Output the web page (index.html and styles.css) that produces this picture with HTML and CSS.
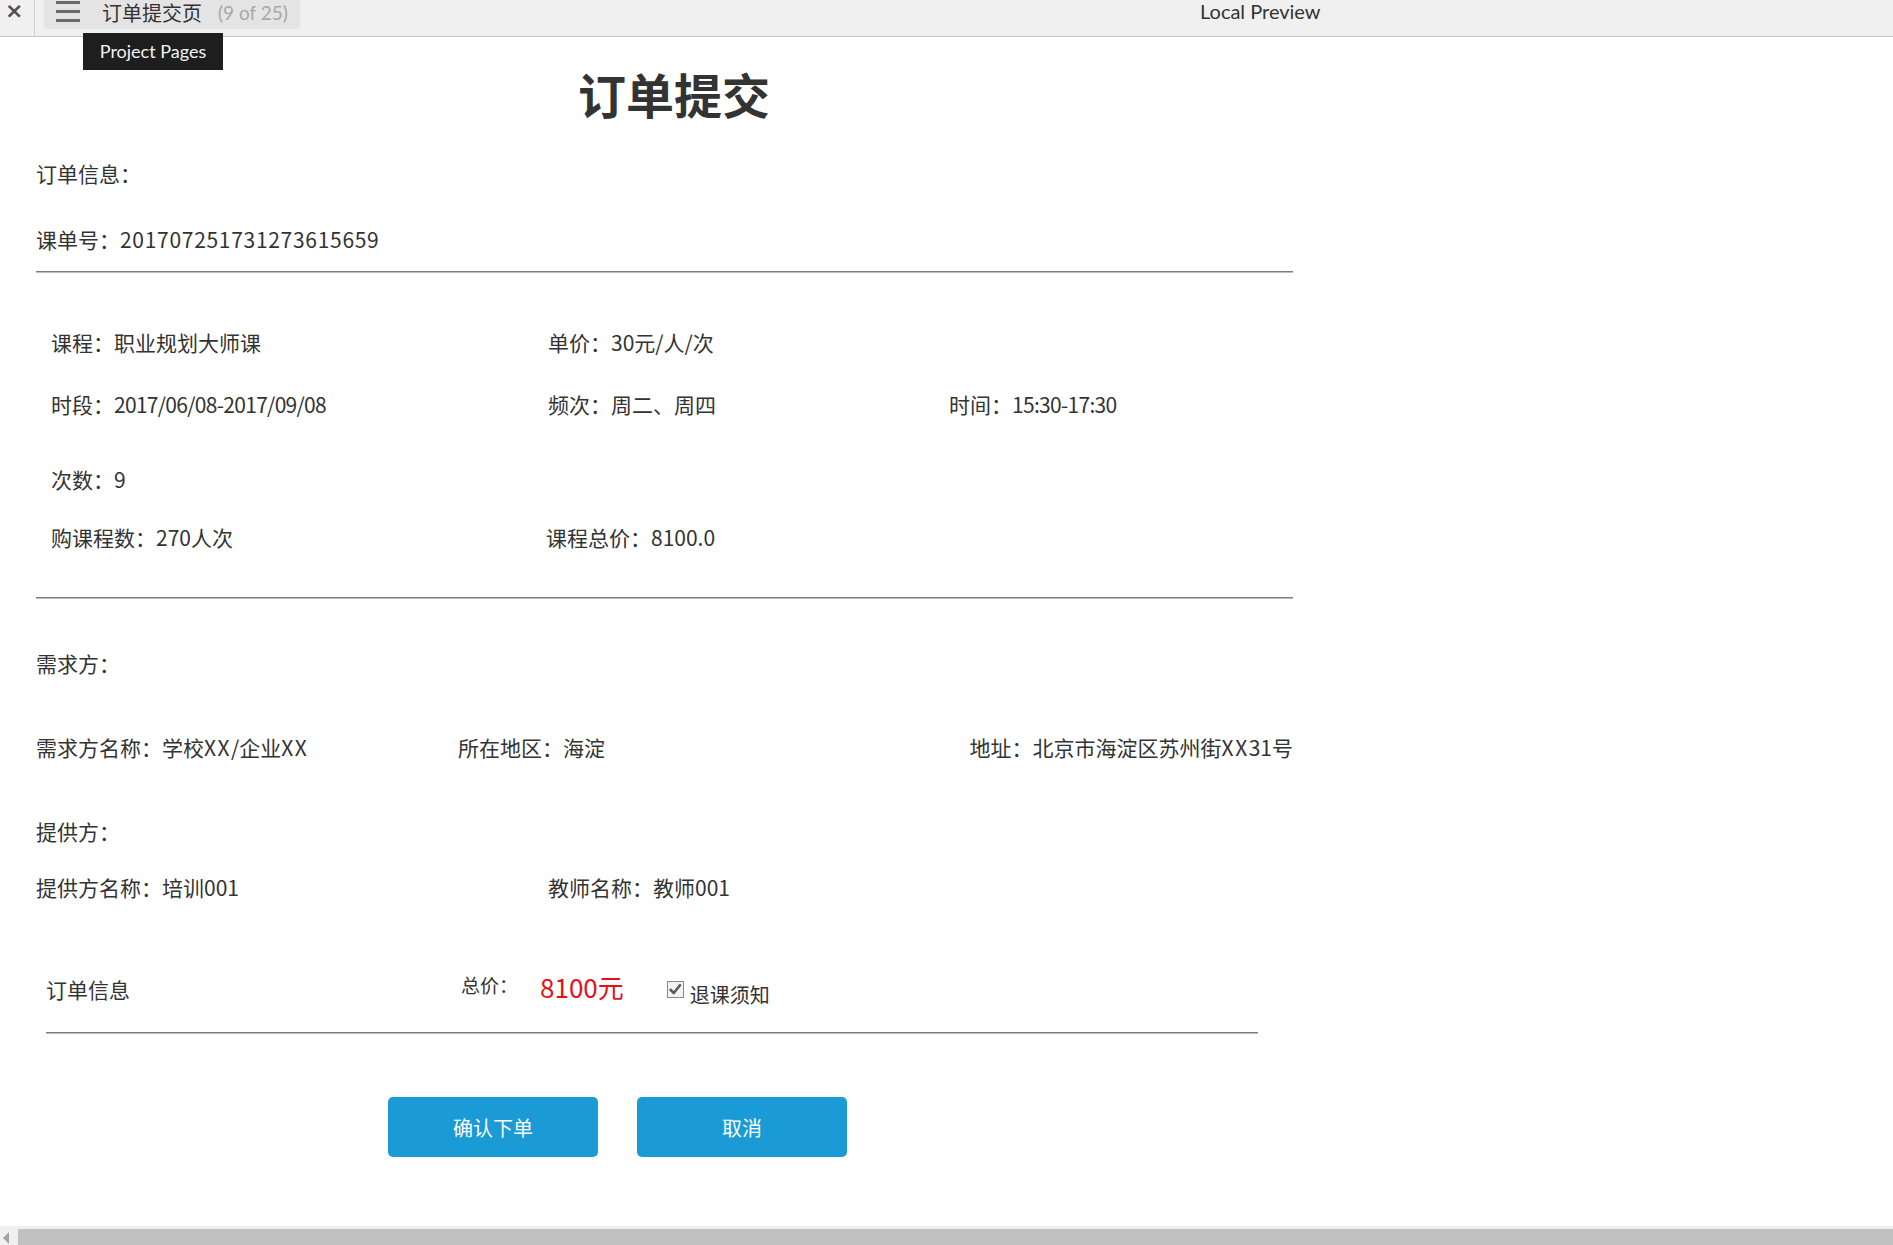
FILE: index.html
```html
<!DOCTYPE html>
<html lang="zh-CN">
<head>
<meta charset="utf-8">
<title>订单提交页</title>
<link rel="stylesheet" href="styles.css">
</head>
<body>
<div class="page">
  <header class="topbar">
    <div class="close">×</div>
    <div class="sep"></div>
    <div class="tab">
      <span class="burger"><i></i><i></i><i></i></span>
      <span class="tab-title">订单提交页</span>
      <span class="tab-count">(9 of 25)</span>
    </div>
    <div class="preview-label">Local Preview</div>
    <div class="tooltip">Project Pages</div>
  </header>

  <main class="content">
    <div class="title-wrap"><h1 class="title">订单提交</h1></div>

    <div class="row sec-label m38">订单信息：</div>
    <div class="row m38">课单号：<span class="order-no">201707251731273615659</span></div>
    <div class="rule m18"></div>

    <div class="course">
      <div class="row m55">
        <span class="c1">课程：职业规划大师课</span>
        <span class="c2">单价：30元/人/次</span>
      </div>
      <div class="row m34">
        <span class="c1">时段：<span class="narrow">2017/06/08-2017/09/08</span></span>
        <span class="c2">频次：周二、周四</span>
        <span class="c3">时间：<span class="narrow">15:30-17:30</span></span>
      </div>
      <div class="row m47">
        <span class="c1">次数：9</span>
      </div>
      <div class="row m30">
        <span class="c1">购课程数：270人次</span>
        <span class="c2 shift">课程总价：8100.0</span>
      </div>
    </div>
    <div class="rule m46"></div>

    <div class="row sec-label m50">需求方：</div>
    <div class="row m56 demand">
      <span class="d1">需求方名称：学校<span class="wide">XX</span>/企业<span class="wide">XX</span></span>
      <span class="d2">所在地区：海淀</span>
      <span class="d3">地址：北京市海淀区苏州街<span class="wide">XX</span>31号</span>
    </div>

    <div class="row sec-label m56">提供方：</div>
    <div class="row m28">
      <span class="p1">提供方名称：培训001</span>
      <span class="p2">教师名称：教师001</span>
    </div>

    <div class="summary">
      <span class="s-label">订单信息</span>
      <span class="s-total">总价：</span>
      <span class="s-price">8100元</span>
      <span class="s-check">
        <svg width="17" height="17" viewBox="0 0 17 17" aria-hidden="true">
          <rect x="0.5" y="0.5" width="16" height="16" fill="#f3f3f3" stroke="#8a8a8a"/>
          <path d="M3.5 8.8 L6.8 12 L13 4.2" fill="none" stroke="#5a5a5a" stroke-width="2.6" stroke-linecap="round" stroke-linejoin="round"/>
        </svg>
      </span>
      <span class="s-notice">退课须知</span>
    </div>
    <div class="rule rule-short"></div>

    <div class="actions">
      <button class="btn">确认下单</button>
      <button class="btn">取消</button>
    </div>
  </main>

  <div class="hscroll">
    <span class="arrow"></span>
    <div class="thumb"></div>
  </div>
</div>
</body>
</html>
```

FILE: styles.css
```css
* { box-sizing: border-box; }

html, body {
  margin: 0;
  padding: 0;
  background: #ffffff;
}

body {
  font-family: "Noto Sans CJK SC", "Noto Sans", sans-serif;
  color: #333333;
}

.page {
  display: flex;
  flex-direction: column;
  min-height: 100vh;
  overflow: hidden;
}

/* ---------- top bar ---------- */
.topbar {
  position: relative;
  display: flex;
  align-items: flex-start;
  height: 37px;
  background: #f0f0f0;
  border-bottom: 1px solid #c8c8c8;
  flex: none;
}

.close {
  width: 34px;
  height: 36px;
  padding-left: 5px;
  padding-top: 2px;
  font-family: "DejaVu Sans", sans-serif;
  font-size: 22px;
  font-weight: bold;
  line-height: 17px;
  color: #505050;
}

.sep {
  width: 1px;
  height: 36px;
  background: #cfcfcf;
}

.tab {
  display: flex;
  align-items: flex-start;
  margin-left: 9px;
  width: 256px;
  height: 29px;
  background: #e4e4e4;
  border-radius: 0 0 4px 4px;
}

.burger {
  display: flex;
  flex-direction: column;
  gap: 6px;
  margin-left: 12px;
  padding-top: 1px;
  width: 24px;
}

.burger i {
  display: block;
  height: 3px;
  background: #6a6a6a;
}

.tab-title {
  margin-left: 22px;
  padding-top: 2px;
  font-size: 20px;
  line-height: 22px;
  color: #333333;
}

.tab-count {
  margin-left: 16px;
  padding-top: 2px;
  font-family: Lato, "Noto Sans", sans-serif;
  font-size: 19px;
  line-height: 22px;
  color: #a8a8a8;
}

.preview-label {
  margin-left: 900px;
  padding-top: 1px;
  font-family: Lato, "Noto Sans", sans-serif;
  font-size: 20px;
  line-height: 20px;
  color: #333333;
}

.tooltip {
  position: absolute;
  left: 83px;
  top: 33px;
  width: 140px;
  height: 37px;
  background: #1e1e1e;
  color: #f2f2f2;
  font-family: Lato, "Noto Sans", sans-serif;
  font-size: 18px;
  line-height: 37px;
  text-align: center;
  z-index: 5;
}

/* ---------- content ---------- */
.content {
  flex: 1;
  padding-left: 36px;
  font-size: 21px;
}

.title-wrap {
  padding-top: 28px;
  padding-left: 542px;
}

.title {
  margin: 0;
  font-size: 48px;
  font-weight: bold;
  line-height: 56px;
  height: 56px;
  color: #333333;
}

.row {
  display: flex;
  height: 28px;
  line-height: 28px;
  white-space: nowrap;
}

.order-no { letter-spacing: 0.7px; }
.narrow { letter-spacing: -0.7px; }
.wide { letter-spacing: 1.5px; }

.m18 { margin-top: 18px; }
.m28 { margin-top: 28px; }
.m30 { margin-top: 30px; }
.m34 { margin-top: 34px; }
.m38 { margin-top: 38px; }
.m46 { margin-top: 46px; }
.m47 { margin-top: 47px; }
.m50 { margin-top: 50px; }
.m55 { margin-top: 55px; }
.m56 { margin-top: 56px; }

.rule {
  width: 1257px;
  height: 2px;
  background: linear-gradient(#7c7c7c 0 1px, #bdbdbd 1px 2px);
}

.course { padding-left: 15px; }
.c1 { width: 497px; }
.c2 { width: 401px; }
.c2.shift { margin-left: -2px; }

.demand { width: 1257px; }
.d1 { width: 422px; }
.d3 { margin-left: auto; }

.p1 { width: 512px; }

/* ---------- summary ---------- */
.summary {
  display: flex;
  align-items: center;
  margin-top: 68px;
  margin-left: 10px;
  height: 40px;
  white-space: nowrap;
}

.s-label { width: 415px; }

.s-total {
  font-size: 19px;
  margin-bottom: 10px;
}

.s-price {
  margin-left: 22px;
  font-size: 26px;
  color: #e5101b;
  margin-bottom: 6px;
}

.s-check {
  display: flex;
  margin-left: 43px;
}

.s-notice {
  margin-left: 6px;
  font-size: 20px;
  margin-top: 10px;
}

.rule-short {
  width: 1212px;
  margin-left: 10px;
  margin-top: 23px;
}

.actions {
  display: flex;
  gap: 39px;
  margin-top: 63px;
  padding-left: 352px;
}

.btn {
  width: 210px;
  height: 60px;
  border: none;
  border-radius: 5px;
  background: #1a9bd6;
  color: #ffffff;
  font-family: "Noto Sans CJK SC", sans-serif;
  font-size: 20px;
  cursor: pointer;
}

/* ---------- horizontal scrollbar ---------- */
.hscroll {
  display: flex;
  flex: none;
  height: 19px;
  padding-top: 3px;
  background: #f0f0f0;
}

.arrow {
  width: 0;
  height: 0;
  margin: 3px 0 0 3px;
  border-top: 6px solid transparent;
  border-bottom: 6px solid transparent;
  border-right: 6px solid #a3a3a3;
}

.thumb {
  flex: 1;
  margin-left: 9px;
  background: #c1c1c1;
}
```
